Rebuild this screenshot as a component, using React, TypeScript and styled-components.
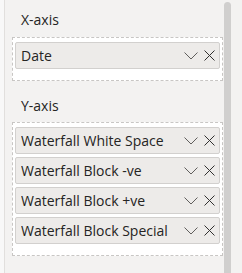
import React from "react";
import styled, { createGlobalStyle } from "styled-components";

const GlobalStyle = createGlobalStyle`
	body {
		margin: 0;
		background: #f3f2f1;
		font-family: "Open Sans", "Liberation Sans", sans-serif;
		color: #252423;
	}
`;

const StyledPane = styled.div`
	display: flex;
	width: 242px;
	height: 273px;
	overflow: hidden;
	background: #f3f2f1;
`;

const StyledEdge = styled.div`
	width: 4px;
	background: #f8f8f8;
	border-right: 1px solid #e1dfdd;
`;

const StyledContents = styled.div`
	width: 219px;
	padding-left: 7px;
	padding-right: 1px;
	box-sizing: border-box;
`;

const StyledLabel = styled.div<{ $top: number; $bottom: number }>`
	padding-left: 9px;
	font-size: 14px;
	line-height: 19px;
	height: 19px;
	margin-top: ${(p) => p.$top}px;
	margin-bottom: ${(p) => p.$bottom}px;
`;

const StyledWell = styled.div`
	display: flex;
	flex-direction: column;
	gap: 3px;
	padding: 4px 2px 11px 2px;
	background: #fff;
	border: 1px dashed #c8c6c4;
`;

const StyledField = styled.div`
	display: flex;
	align-items: center;
	height: 27px;
	padding: 0 4px 0 5px;
	background: #edebe9;
	border: 1px solid #d2d0ce;
	border-radius: 2px;
	box-sizing: border-box;
	font-size: 14px;
	span {
		flex: 1;
		white-space: nowrap;
		overflow: hidden;
	}
`;

const StyledIcons = styled.div`
	display: flex;
	align-items: center;
	gap: 6px;
	svg {
		display: block;
	}
`;

const StyledScroll = styled.div`
	width: 7px;
	margin-top: 2px;
	background: #d0cfce;
	border-radius: 4px 4px 0 0;
`;

const Chevron = () => (
	<svg width="14" height="8" viewBox="0 0 14 8">
		<path d="M0.5 0.5 L7 7 L13.5 0.5" fill="none" stroke="#605e5c" strokeWidth="1" />
	</svg>
);

const Close = () => (
	<svg width="11" height="11" viewBox="0 0 11 11">
		<path d="M0.5 0.5 L10.5 10.5 M10.5 0.5 L0.5 10.5" fill="none" stroke="#323130" strokeWidth="1" />
	</svg>
);

const Field = ({ name }: { name: string }) => (
	<StyledField>
		<span>{name}</span>
		<StyledIcons>
			<Chevron />
			<Close />
		</StyledIcons>
	</StyledField>
);

const yFields = ["Waterfall White Space", "Waterfall Block -ve", "Waterfall Block +ve", "Waterfall Block Special"];

const App = () => {
	return (
		<>
			<GlobalStyle />
			<StyledPane>
				<StyledEdge />
				<StyledContents>
					<StyledLabel $top={10} $bottom={8}>
						X-axis
					</StyledLabel>
					<StyledWell>
						<Field name="Date" />
					</StyledWell>
					<StyledLabel $top={15} $bottom={7}>
						Y-axis
					</StyledLabel>
					<StyledWell>
						{yFields.map((f) => (
							<Field key={f} name={f} />
						))}
					</StyledWell>
				</StyledContents>
				<StyledScroll />
			</StyledPane>
		</>
	);
};

export default App;
